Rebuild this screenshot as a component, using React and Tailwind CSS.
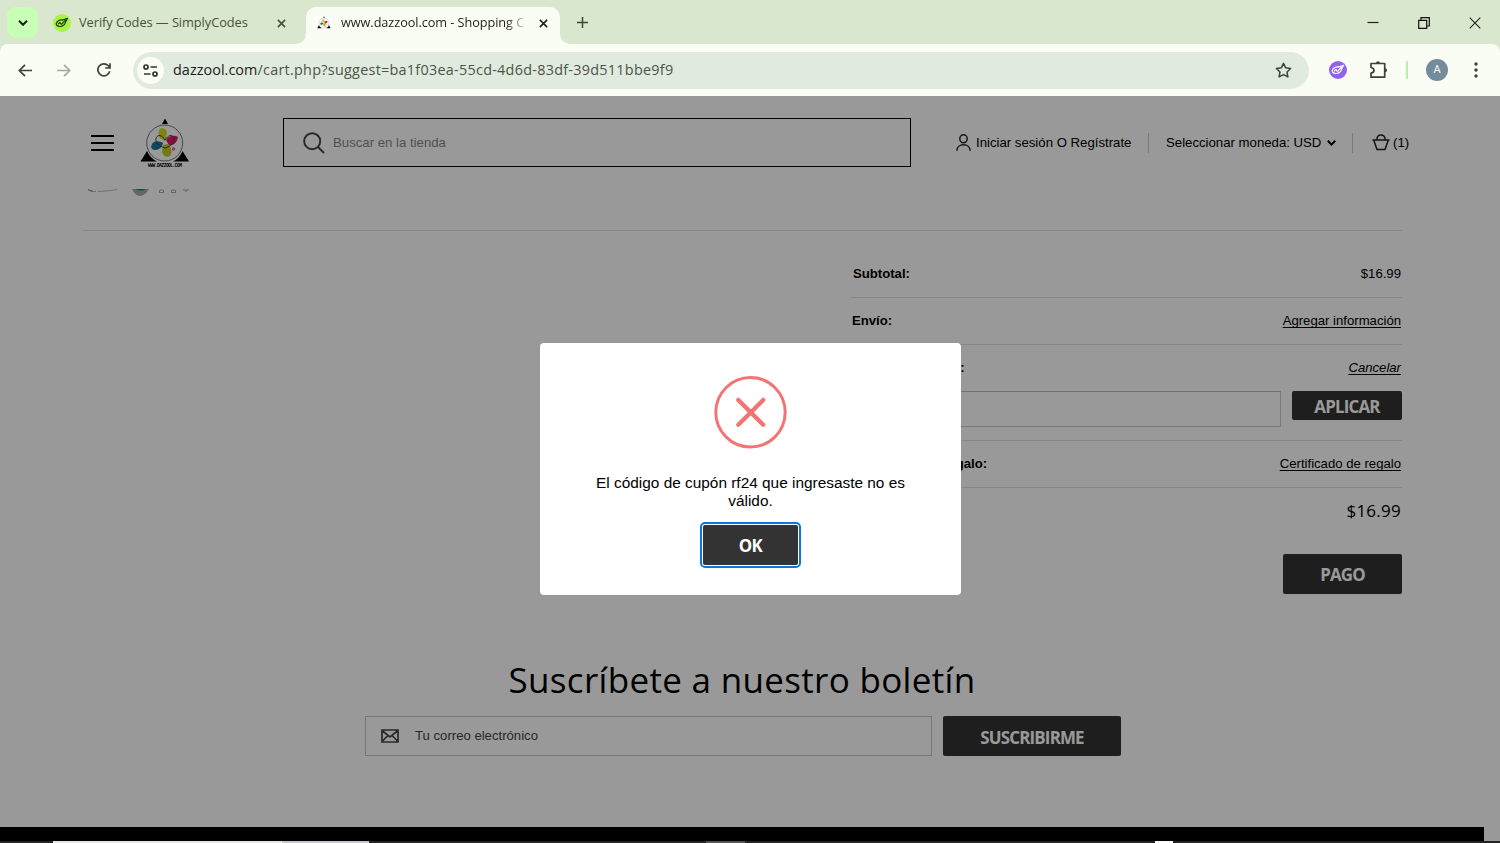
import { FiStar } from "react-icons/fi";

const HEADER_LINK = "text-[13.2px] leading-none text-black whitespace-nowrap";
const STORE_BUTTON =
  "flex items-center justify-center rounded-xs bg-[#333333] pt-[3px] font-['Open_Sans',sans-serif] text-[16.9px] font-bold tracking-[-0.8px] text-white";

function LeafMark({ className, bg, ink }) {
  return (
    <svg className={className} viewBox="0 0 18 18" fill="none">
      <circle cx="9" cy="9" r="9" fill={bg} />
      <g stroke={ink} strokeWidth="1.2" strokeLinecap="round" strokeLinejoin="round">
        <path d="M9.6 6C6.5 5.600 3.800 7.300 3.300 9.300 3 10.800 4 12 6 12.400 9.500 12.900 12 11 12.300 8.500" />
        <path d="M9.600 6 14.500 4.300 12.300 8.500M5.400 9.800C6.600 8.200 7.700 8.300 7.600 9.800 8.600 10.600 9.600 9.900 9.800 8.800L12.200 6.300" />
      </g>
    </svg>
  );
}

function StoreLogo({ className, caption = true }) {
  return (
    <svg className={className} viewBox="0 0 50 50">
      <path d="M25 0.500 28 6H22ZM7 33 0.500 43.500H17Q10 40 7 33ZM42.500 33 49 43.500H33Q40 40 42.500 33Z" fill="#000" />
      <circle cx="24.700" cy="25" r="18" fill="#fff" stroke="#777" strokeWidth="1" />
      <path d="M20 11c3-2 7 1 7 4l-2 8-5-3c-2-3-2-7 0-9Z" fill="#d9dc1c" />
      <path d="M23 27l5-1c3 3 5 8 2 12-3 2-7 0-8-4Z" fill="#c4cc19" />
      <path d="M12 26c2-4 8-3 11-1l-1 3c-3 5-10 5-11 1Z" fill="#167a96" />
      <path d="M26 22c3-5 9-5 12-3-1 5-4 9-9 8Z" fill="#e41b68" />
      <circle cx="33.500" cy="31" r="1.700" fill="#e46aa6" />
      <path d="M16 20c2-4 6-3 9 2 3-5 7-6 9-2 1 5-3 8-9 10-6-2-10-5-9-10Z" fill="none" stroke="#444" strokeWidth="1" />
      {caption && (
        <text x="8" y="48.500" fontSize="4.500" fontWeight="700" textLength="34" lengthAdjust="spacing" fontFamily="Liberation Mono, monospace">
          WWW.DAZZOOL.COM
        </text>
      )}
    </svg>
  );
}

function CloseIcon({ className }) {
  return (
    <svg className={className} viewBox="0 0 10 10" stroke="currentColor" strokeWidth="1.800">
      <path d="M1 1 9 9M9 1 1 9" />
    </svg>
  );
}

function TabStrip() {
  return (
    <div className="flex h-11 shrink-0 items-end bg-[#d8e7cd]">
      <div className="mb-[6px] ml-[7px] flex h-[31px] w-[31px] items-center justify-center rounded-[9px] bg-[#c9ffb4]">
        <svg className="h-[6px] w-[10px]" viewBox="0 0 10 6" fill="none" stroke="#17210f" strokeWidth="2">
          <path d="M1 .8 5 4.800 9 .8" />
        </svg>
      </div>
      <div className="flex h-[37px] w-[268px] items-center pb-[5px] text-[#46523f]">
        <LeafMark className="ml-[15px] h-[18px] w-[18px]" bg="#a8f545" ink="#1c3a12" />
        <span className="ml-[8px] w-[190px] whitespace-nowrap text-[12.800px] tracking-[-0.050px]">Verify Codes — SimplyCodes</span>
        <CloseIcon className="ml-[8px] h-[9px] w-[9px]" />
      </div>
      <div className="relative flex h-[37px] w-[254px] items-center rounded-t-[10px] bg-[#f9fdf3] pb-[5px] pl-[10px] pr-3 text-[#1c2119]">
        <svg className="absolute -left-[10px] bottom-0 h-[10px] w-[10px]" viewBox="0 0 10 10">
          <path d="M10 0V10H0A10 10 0 0 0 10 0Z" fill="#f9fdf3" />
        </svg>
        <svg className="absolute -right-[10px] bottom-0 h-[10px] w-[10px]" viewBox="0 0 10 10">
          <path d="M0 0V10H10A10 10 0 0 1 0 0Z" fill="#f9fdf3" />
        </svg>
        <span className="flex h-[15px] w-[15px] shrink-0 items-center justify-center bg-white">
          <StoreLogo className="h-[14px] w-[14px]" caption={false} />
        </span>
        <span className="ml-[10px] w-[186px] whitespace-nowrap text-[12.700px] tracking-[-0.050px] [mask-image:linear-gradient(to_right,black_165px,transparent_188px)]">
          www.dazzool.com - Shopping C
        </span>
        <CloseIcon className="ml-[12px] h-[9px] w-[9px] shrink-0" />
      </div>
      <svg className="mb-4 ml-[17px] h-[11px] w-[11px]" viewBox="0 0 11 11" stroke="#3a4a33" strokeWidth="1.500">
        <path d="M5.500 0V11M0 5.500H11" />
      </svg>
      <div className="mb-[15px] ml-auto mr-[19px] flex items-center gap-[39px]">
        <svg className="h-3 w-3" viewBox="0 0 12 12" stroke="#222" strokeWidth="1.200">
          <path d="M.5 5.500H11.500" />
        </svg>
        <svg className="h-3 w-3" viewBox="0 0 12 12" fill="none" stroke="#111" strokeWidth="1.200">
          <path d="M.7 3.300H8.700V11.300H.7ZM3 3V.7H11.300V9H9" />
        </svg>
        <svg className="h-3 w-3" viewBox="0 0 12 12" stroke="#222" strokeWidth="1.100">
          <path d="M.7.7 11.300 11.300M11.300.7.7 11.300" />
        </svg>
      </div>
    </div>
  );
}

function Toolbar() {
  return (
    <div className="bg-[#d8e7cd]">
      <div className="flex h-[52px] shrink-0 items-center rounded-t-lg bg-[#f9fdf3] pl-[18px] text-[#3b4436]">
        <svg className="h-[13px] w-[14px]" viewBox="0 0 14 13" fill="none" stroke="currentColor" strokeWidth="1.700">
          <path d="M14 6.500H1.500M7 .8 1.300 6.500 7 12.200" />
        </svg>
        <svg className="ml-[25px] h-[13px] w-[14px] text-[#a5aaa0]" viewBox="0 0 14 13" fill="none" stroke="currentColor" strokeWidth="1.700">
          <path d="M0 6.500H12.500M7 .8 12.700 6.500 7 12.200" />
        </svg>
        <svg className="ml-[26px] h-[14px] w-[14px]" viewBox="0 0 14 14" fill="none" stroke="currentColor" strokeWidth="1.700">
          <path d="M12.700 8.300A6 6 0 1 1 11.300 2.800L13 4.700M13 .2V5H8.200" />
        </svg>
        <div className="ml-[22px] flex h-[37px] w-[1176px] items-center rounded-full bg-[#e1eadf] pl-[4px]">
          <div className="flex h-[27px] w-[27px] items-center justify-center rounded-full bg-[#f9fdf3]">
            <svg className="h-[13px] w-[15px]" viewBox="0 0 15 13" fill="none" stroke="#2d3529" strokeWidth="1.700">
              <circle cx="3" cy="3" r="2" />
              <circle cx="12" cy="10" r="2" />
              <path d="M7.500 3H14M1 10H7.500" />
            </svg>
          </div>
          <span className="ml-[9px] whitespace-nowrap text-[14.400px] tracking-[0.270px] text-[#4b5547]">
            <span className="tracking-[0.050px] text-[#1c2119]">dazzool.com</span>
            /cart.php?suggest=ba1f03ea-55cd-4d6d-83df-39d511bbe9f9
          </span>
          <FiStar className="ml-auto mr-[17px]" size={17} strokeWidth={2.200} />
        </div>
        <LeafMark className="ml-[20px] h-[18px] w-[18px]" bg="#9462f2" ink="#fff" />
        <svg className="ml-[22px] h-[19px] w-[19px]" viewBox="0 0 19 19" fill="none" stroke="currentColor" strokeWidth="1.700" strokeLinejoin="round">
          <path d="M2 2.500H15.700V16.200H2V12.200C6 11.500 6 7 2 6.500Z" />
          <path d="M7 2.200A2 2 0 0 1 11 2.200ZM16 7.300A2 2 0 0 1 16 11.300Z" fill="currentColor" stroke="none" />
        </svg>
        <div className="ml-[18px] h-[18px] w-[2px] bg-[#b9efad]" />
        <div className="ml-[18px] flex h-[22px] w-[22px] items-center justify-center rounded-full bg-[#748b9b] font-['Roboto',sans-serif] text-[11px] text-white">
          A
        </div>
        <svg className="ml-[26px] h-4 w-[4px]" viewBox="0 0 4 16" fill="currentColor">
          <circle cx="2" cy="2" r="1.700" />
          <circle cx="2" cy="8" r="1.700" />
          <circle cx="2" cy="14" r="1.700" />
        </svg>
      </div>
    </div>
  );
}

function StoreHeader() {
  return (
    <header className="flex h-[93px] items-center">
      <div className="ml-[91px] flex w-[23px] flex-col gap-[5px]">
        <span className="h-[2px] bg-black" />
        <span className="h-[2px] bg-black" />
        <span className="h-[2px] bg-black" />
      </div>
      <StoreLogo className="ml-[26px] h-[50px] w-[50px]" />
      <div className="ml-[93px] flex h-[49px] w-[628px] items-center border border-black pl-[19px]">
        <svg className="h-[22px] w-[22px]" viewBox="0 0 22 22" fill="none" stroke="#444" strokeWidth="1.900">
          <circle cx="9.200" cy="9.200" r="8" />
          <path d="M15 15 21 21" />
        </svg>
        <span className="ml-[8px] text-[13.200px] text-[#888]">Buscar en la tienda</span>
      </div>
      <svg className="ml-[45px] h-[18px] w-[15px]" viewBox="0 0 15 18" fill="none" stroke="#222" strokeWidth="1.500">
        <ellipse cx="7.500" cy="4.800" rx="3.700" ry="4" />
        <path d="M.8 16.800C1 8.800 14 8.800 14.200 16.800" />
      </svg>
      <span className={`ml-[5px] w-[156px] ${HEADER_LINK}`}>Iniciar sesión O Regístrate</span>
      <span className="ml-4 h-5 w-px bg-[#cccccc]" />
      <span className={`ml-[17px] w-[155px] ${HEADER_LINK}`}>Seleccionar moneda: USD</span>
      <svg className="ml-[6px] h-[6px] w-[9px]" viewBox="0 0 9 6" fill="none" stroke="#000" strokeWidth="2">
        <path d="M.8 .8 4.500 4.600 8.200 .8" />
      </svg>
      <span className="ml-[16px] h-5 w-px bg-[#cccccc]" />
      <svg className="ml-[19px] h-[17px] w-[18px]" viewBox="0 0 18 17" fill="none" stroke="#222" strokeWidth="1.500">
        <path d="M.5 6H17.500M1.700 6 5 15.500H13L16.300 6M4.800 6C5 -.6 13 -.6 13.200 6" />
      </svg>
      <span className={`ml-[3px] ${HEADER_LINK}`}>(1)</span>
    </header>
  );
}

function CartTotals() {
  return (
    <section className="ml-[850px] mt-5 w-[552px] text-[13.150px] leading-none text-black">
      <div className="flex h-[47px] items-center justify-between border-b border-[#dfdfdf] pl-[3px] pr-px">
        <b>Subtotal:</b>
        <span>$16.99</span>
      </div>
      <div className="flex h-[47px] items-center justify-between border-b border-[#dfdfdf] pl-[2px] pr-px">
        <b>Envío:</b>
        <a className="underline underline-offset-2">Agregar información</a>
      </div>
      <div className="h-24 border-b border-[#dfdfdf]">
        <div className="flex h-[46px] items-center justify-between pl-[3px] pr-px">
          <b>Código de cupón:</b>
          <a className="italic underline underline-offset-2">Cancelar</a>
        </div>
        <div className="flex items-start justify-between">
          <div className="h-[36px] w-[431px] border border-[#cacaca] border-t-[#bbb]" />
          <div className={`h-[29px] w-[110px] ${STORE_BUTTON}`}>APLICAR</div>
        </div>
      </div>
      <div className="flex h-[47px] items-center justify-between border-b border-[#dfdfdf] pl-[2px] pr-px">
        <b>Certificado de regalo:</b>
        <a className="underline underline-offset-2">Certificado de regalo</a>
      </div>
      <div className="flex h-[45px] items-center justify-end pr-px font-['Open_Sans',sans-serif] text-[17px] tracking-[0.250px]">
        $16.99
      </div>
      <div className={`ml-auto mt-[21px] h-[40px] w-[119px] ${STORE_BUTTON}`}>PAGO</div>
    </section>
  );
}

function Newsletter() {
  return (
    <section className="mt-[59px] w-[1484px]">
      <h2 className="text-center font-['Open_Sans',sans-serif] text-[35px] leading-[54px] tracking-[0.320px] text-black">
        Suscríbete a nuestro boletín
      </h2>
      <div className="ml-[365px] mt-[9px] flex gap-[11px]">
        <div className="flex h-10 w-[567px] items-center border border-[#c6c6c6] pl-[15px]">
          <svg className="h-[14px] w-[18px]" viewBox="0 0 18 14" fill="none" stroke="#444" strokeWidth="1.700">
            <path d="M1 1H17V13H1ZM1 1.500 9 8 17 1.500M1 12.500 6.500 7M17 12.500 11.500 7" />
          </svg>
          <span className="ml-[16px] text-[13.150px] text-[#444]">Tu correo electrónico</span>
        </div>
        <div className={`h-10 w-[178px] ${STORE_BUTTON}`}>SUSCRIBIRME</div>
      </div>
    </section>
  );
}

function ErrorDialog() {
  return (
    <div className="absolute inset-0 flex items-center justify-center bg-black/40 pl-px">
      <div className="flex h-[252px] w-[421px] flex-col items-center rounded-[4px] bg-white pt-[33px]">
        <svg className="h-[73px] w-[73px]" viewBox="0 0 73 73" fill="none" stroke="#f27474" strokeLinecap="round">
          <circle cx="36.500" cy="36.300" r="34.700" strokeWidth="3" />
          <path d="M24.300 23.900 49.200 48.800M49.200 23.900 24.300 48.800" strokeWidth="4.300" />
        </svg>
        <p className="mt-[25px] w-[340px] text-center text-[15.400px] leading-[18px] text-black">
          El código de cupón rf24 que ingresaste no es válido.
        </p>
        <button className="mt-[12px] rounded-[5px] border-2 border-[#1173e0] bg-white p-px">
          <span className="flex h-[40px] w-[95px] items-center justify-center rounded-xs bg-[#333333] pt-[3px] font-['Open_Sans',sans-serif] text-[16.900px] font-bold tracking-[-0.600px] text-white">
            OK
          </span>
        </button>
      </div>
    </div>
  );
}

export default function App() {
  return (
    <div className="flex h-[843px] w-[1500px] flex-col overflow-hidden bg-white font-['Open_Sans',sans-serif]">
      <TabStrip />
      <Toolbar />
      <main className="relative h-[745px] shrink-0 overflow-hidden bg-white font-['Liberation_Sans',Arial,sans-serif]">
        <StoreHeader />
        {/* bottom edge of the product thumbnail, scrolled under the header */}
        <svg className="ml-[85px] h-[8px] w-[106px]" viewBox="0 0 106 8">
          <path d="M3 .5Q5 3 11 2.500M13 2.500Q25 2 32 .5" fill="none" stroke="#bbb" />
          <path d="M3 .5 8 2.500" stroke="#5fa79c" />
          <path d="M47 0H64Q60 7 55 7 50 7 47 0Z" fill="#aaa" />
          <path d="M50 0H61Q57 3 50 0Z" fill="#168a76" />
          <path d="M74 3.500H79M74.500 1V4M78.500 1V4M75 1H78M86 3.500H91M86.500 1V4M90.500 1V4M87 1H90M98 1H104M101 1V3" fill="none" stroke="#aaa" />
        </svg>
        <div className="ml-[82px] mt-[33px] h-px w-[1320px] bg-[#dfdfdf]" />
        <CartTotals />
        <Newsletter />
        <div className="mt-[71px] h-[14px] w-[1484px] bg-black" />
        <ErrorDialog />
      </main>
      <div className="flex h-[2px] bg-[#242424]">
        <div className="ml-[53px] h-full w-[229px] bg-[#e5e5e5]" />
        <div className="h-full w-[87px] bg-[#c4c8ca]" />
        <div className="ml-[337px] h-full w-[39px] bg-[#555]" />
        <div className="ml-[410px] h-full w-[18px] bg-white" />
      </div>
    </div>
  );
}
